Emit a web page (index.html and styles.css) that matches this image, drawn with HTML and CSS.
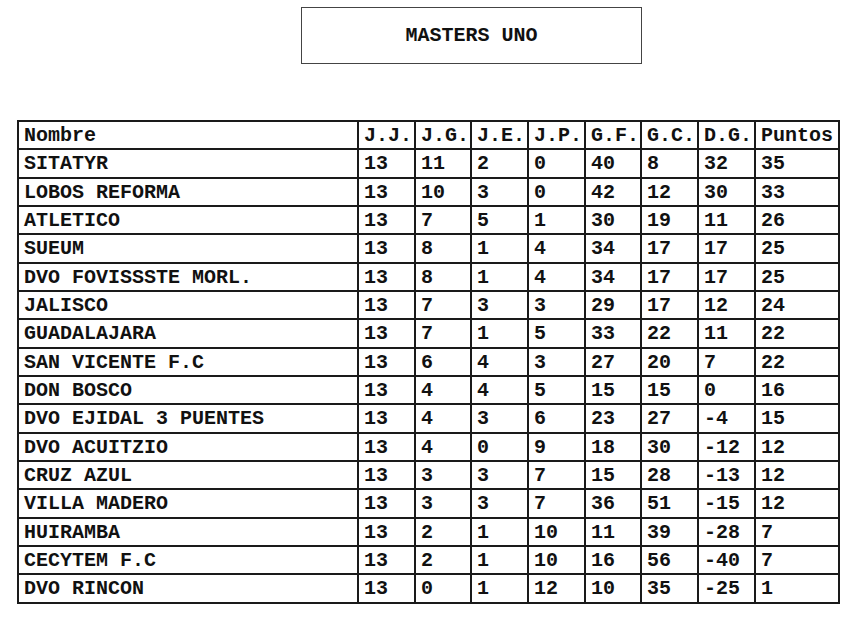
FILE: index.html
```html
<!DOCTYPE html>
<html lang="es">
<head>
<meta charset="utf-8">
<title>MASTERS UNO</title>
<link rel="stylesheet" href="styles.css">
</head>
<body>
<div class="page">
  <div class="title">MASTERS UNO</div>
  <table class="standings">
    <colgroup>
      <col class="c-name">
      <col class="c-num"><col class="c-num2"><col class="c-num"><col class="c-num">
      <col class="c-num2"><col class="c-num"><col class="c-num">
      <col class="c-pts">
    </colgroup>
    <tr><td>Nombre</td><td>J.J.</td><td>J.G.</td><td>J.E.</td><td>J.P.</td><td>G.F.</td><td>G.C.</td><td>D.G.</td><td>Puntos</td></tr>
    <tr><td>SITATYR</td><td>13</td><td>11</td><td>2</td><td>0</td><td>40</td><td>8</td><td>32</td><td>35</td></tr>
    <tr><td>LOBOS REFORMA</td><td>13</td><td>10</td><td>3</td><td>0</td><td>42</td><td>12</td><td>30</td><td>33</td></tr>
    <tr><td>ATLETICO</td><td>13</td><td>7</td><td>5</td><td>1</td><td>30</td><td>19</td><td>11</td><td>26</td></tr>
    <tr><td>SUEUM</td><td>13</td><td>8</td><td>1</td><td>4</td><td>34</td><td>17</td><td>17</td><td>25</td></tr>
    <tr><td>DVO FOVISSSTE MORL.</td><td>13</td><td>8</td><td>1</td><td>4</td><td>34</td><td>17</td><td>17</td><td>25</td></tr>
    <tr><td>JALISCO</td><td>13</td><td>7</td><td>3</td><td>3</td><td>29</td><td>17</td><td>12</td><td>24</td></tr>
    <tr><td>GUADALAJARA</td><td>13</td><td>7</td><td>1</td><td>5</td><td>33</td><td>22</td><td>11</td><td>22</td></tr>
    <tr><td>SAN VICENTE F.C</td><td>13</td><td>6</td><td>4</td><td>3</td><td>27</td><td>20</td><td>7</td><td>22</td></tr>
    <tr><td>DON BOSCO</td><td>13</td><td>4</td><td>4</td><td>5</td><td>15</td><td>15</td><td>0</td><td>16</td></tr>
    <tr><td>DVO EJIDAL 3 PUENTES</td><td>13</td><td>4</td><td>3</td><td>6</td><td>23</td><td>27</td><td>-4</td><td>15</td></tr>
    <tr><td>DVO ACUITZIO</td><td>13</td><td>4</td><td>0</td><td>9</td><td>18</td><td>30</td><td>-12</td><td>12</td></tr>
    <tr><td>CRUZ AZUL</td><td>13</td><td>3</td><td>3</td><td>7</td><td>15</td><td>28</td><td>-13</td><td>12</td></tr>
    <tr><td>VILLA MADERO</td><td>13</td><td>3</td><td>3</td><td>7</td><td>36</td><td>51</td><td>-15</td><td>12</td></tr>
    <tr><td>HUIRAMBA</td><td>13</td><td>2</td><td>1</td><td>10</td><td>11</td><td>39</td><td>-28</td><td>7</td></tr>
    <tr><td>CECYTEM F.C</td><td>13</td><td>2</td><td>1</td><td>10</td><td>16</td><td>56</td><td>-40</td><td>7</td></tr>
    <tr><td>DVO RINCON</td><td>13</td><td>0</td><td>1</td><td>12</td><td>10</td><td>35</td><td>-25</td><td>1</td></tr>
  </table>
</div>
</body>
</html>
```
FILE: styles.css
```css
html, body {
  margin: 0;
  padding: 0;
  background: #ffffff;
}

.page {
  font-family: "Courier New", "Liberation Mono", monospace;
  font-weight: bold;
  font-size: 20px;
  color: #111;
  padding-top: 7px;
}

.title {
  box-sizing: border-box;
  margin-left: 301px;
  width: 341px;
  height: 57px;
  border: 1.5px solid #444;
  display: flex;
  align-items: center;
  justify-content: center;
  line-height: 1;
}

.standings {
  margin: 56px 0 0 17px;
  border-collapse: collapse;
  table-layout: fixed;
  width: 822px;
}

.c-name { width: 340px; }
.c-num { width: 57px; }
.c-num2 { width: 56px; }
.c-pts { width: 84px; }

.standings tr {
  height: 28.34px;
}

.standings td {
  border: 2px solid #1a1a1a;
  padding: 2px 5px 0 5px;
  line-height: 1;
  white-space: nowrap;
  vertical-align: middle;
}
```
